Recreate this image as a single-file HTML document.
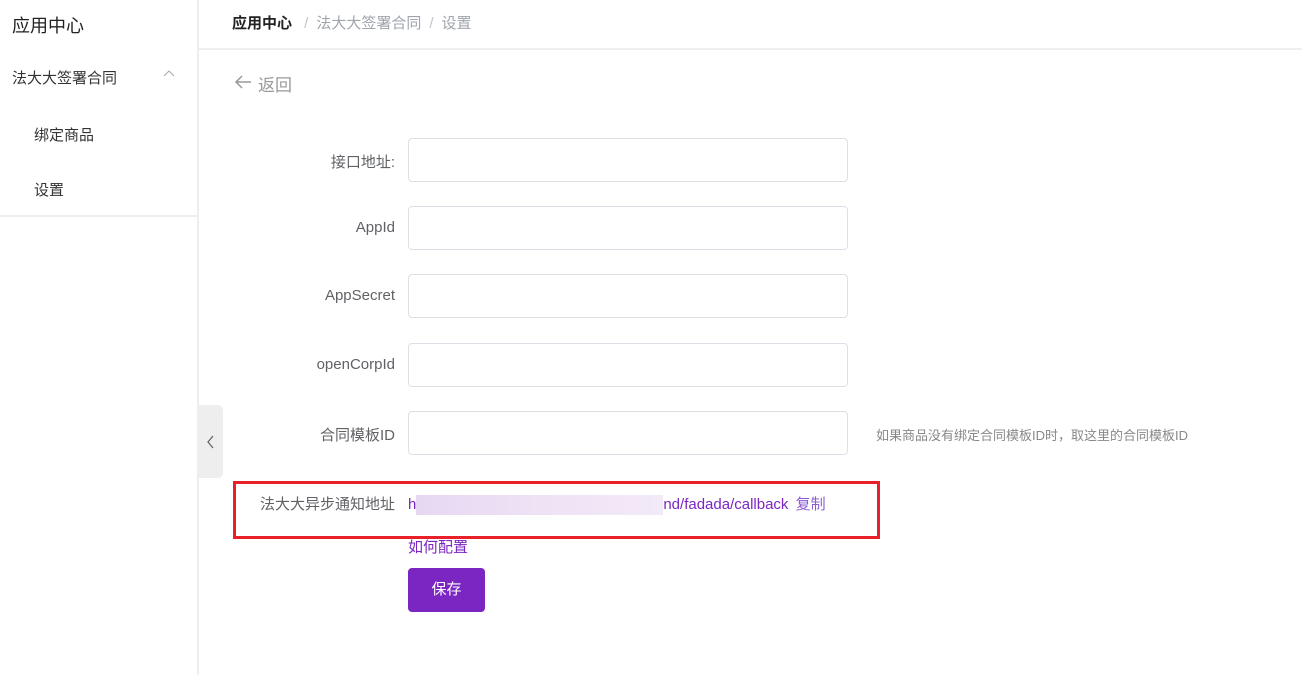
<!DOCTYPE html>
<html><head><meta charset="utf-8"><style>
*{margin:0;padding:0;box-sizing:border-box}
body{width:1302px;height:675px;background:#fff;font-family:"Liberation Sans","Noto Sans CJK SC",sans-serif;position:relative;overflow:hidden;color:#333}
.a{position:absolute;white-space:nowrap}
.inp{position:absolute;left:408px;width:440px;height:44px;border:1px solid #dcdfe6;border-radius:4px}
.lbl{position:absolute;right:907px;font-size:15px;color:#606266}
</style></head><body>
<div class="a" style="left:197px;top:0;width:2px;height:675px;background:#eee"></div>
<div class="a" style="left:0;top:215px;width:197px;height:2px;background:#eee"></div>
<div class="a" style="left:199px;top:48px;width:1103px;height:2px;background:#eee"></div>
<div class="a" style="left:12px;top:12px;font-size:18px;color:#222">应用中心</div>
<div class="a" style="left:12px;top:67px;font-size:15px;color:#333">法大大签署合同</div>
<svg class="a" style="left:163px;top:70px" width="12" height="8"><path d="M1 6 L6 1 L11 6" stroke="#aaa" fill="none" stroke-width="1"/></svg>
<div class="a" style="left:34px;top:124px;font-size:15px;color:#333">绑定商品</div>
<div class="a" style="left:34px;top:179px;font-size:15px;color:#333">设置</div>
<div class="a" style="left:232px;top:12px;font-size:15px;color:#222;font-weight:bold">应用中心 <span style="color:#c0c4cc;font-weight:normal;margin:0 8px">/</span><span style="color:#a0a4ad;font-weight:normal">法大大签署合同</span><span style="color:#c0c4cc;font-weight:normal;margin:0 8px">/</span><span style="color:#a0a4ad;font-weight:normal">设置</span></div>
<svg class="a" style="left:234px;top:74px" width="18" height="16"><path d="M17 8 H2 M8 2 L2 8 L8 14" stroke="#999" fill="none" stroke-width="1.5"/></svg>
<div class="a" style="left:258px;top:71px;font-size:17px;color:#999">返回</div>
<div class="lbl" style="top:151px">接口地址:</div><div class="inp" style="top:138px"></div>
<div class="lbl" style="top:219px">AppId</div><div class="inp" style="top:206px"></div>
<div class="lbl" style="top:287px">AppSecret</div><div class="inp" style="top:274px"></div>
<div class="lbl" style="top:356px">openCorpId</div><div class="inp" style="top:343px"></div>
<div class="lbl" style="top:424px">合同模板ID</div><div class="inp" style="top:411px"></div>
<div class="a" style="left:876px;top:425px;font-size:13px;color:#888">如果商品没有绑定合同模板ID时，取这里的合同模板ID</div>
<div class="a" style="left:198px;top:405px;width:25px;height:73px;background:#eee;border-radius:0 5px 5px 0"></div>
<svg class="a" style="left:205px;top:435px" width="10" height="14"><path d="M8 1 L3 7 L8 13" stroke="#666" fill="none" stroke-width="1.3"/></svg>
<div class="a" style="left:233px;top:481px;width:647px;height:58px;border:3px solid #e8202a"></div>
<div class="lbl" style="top:493px">法大大异步通知地址</div>
<div class="a" style="left:408px;top:493px;font-size:15px;color:#7b25c2">h<span style="display:inline-block;width:247px;height:20px;vertical-align:middle;background:linear-gradient(90deg,#e6d8f2,#eee2f5,#f3eaf8)"></span>nd/fadada/callback <span style="color:#8a5cd6;margin-left:3px">复制</span></div>
<div class="a" style="left:408px;top:536px;font-size:15px;color:#7b25c2">如何配置</div>
<div class="a" style="left:408px;top:568px;width:77px;height:44px;background:#7b25c2;border-radius:4px;color:#fff;font-size:15px;text-align:center;line-height:44px">保存</div>
</body></html>
